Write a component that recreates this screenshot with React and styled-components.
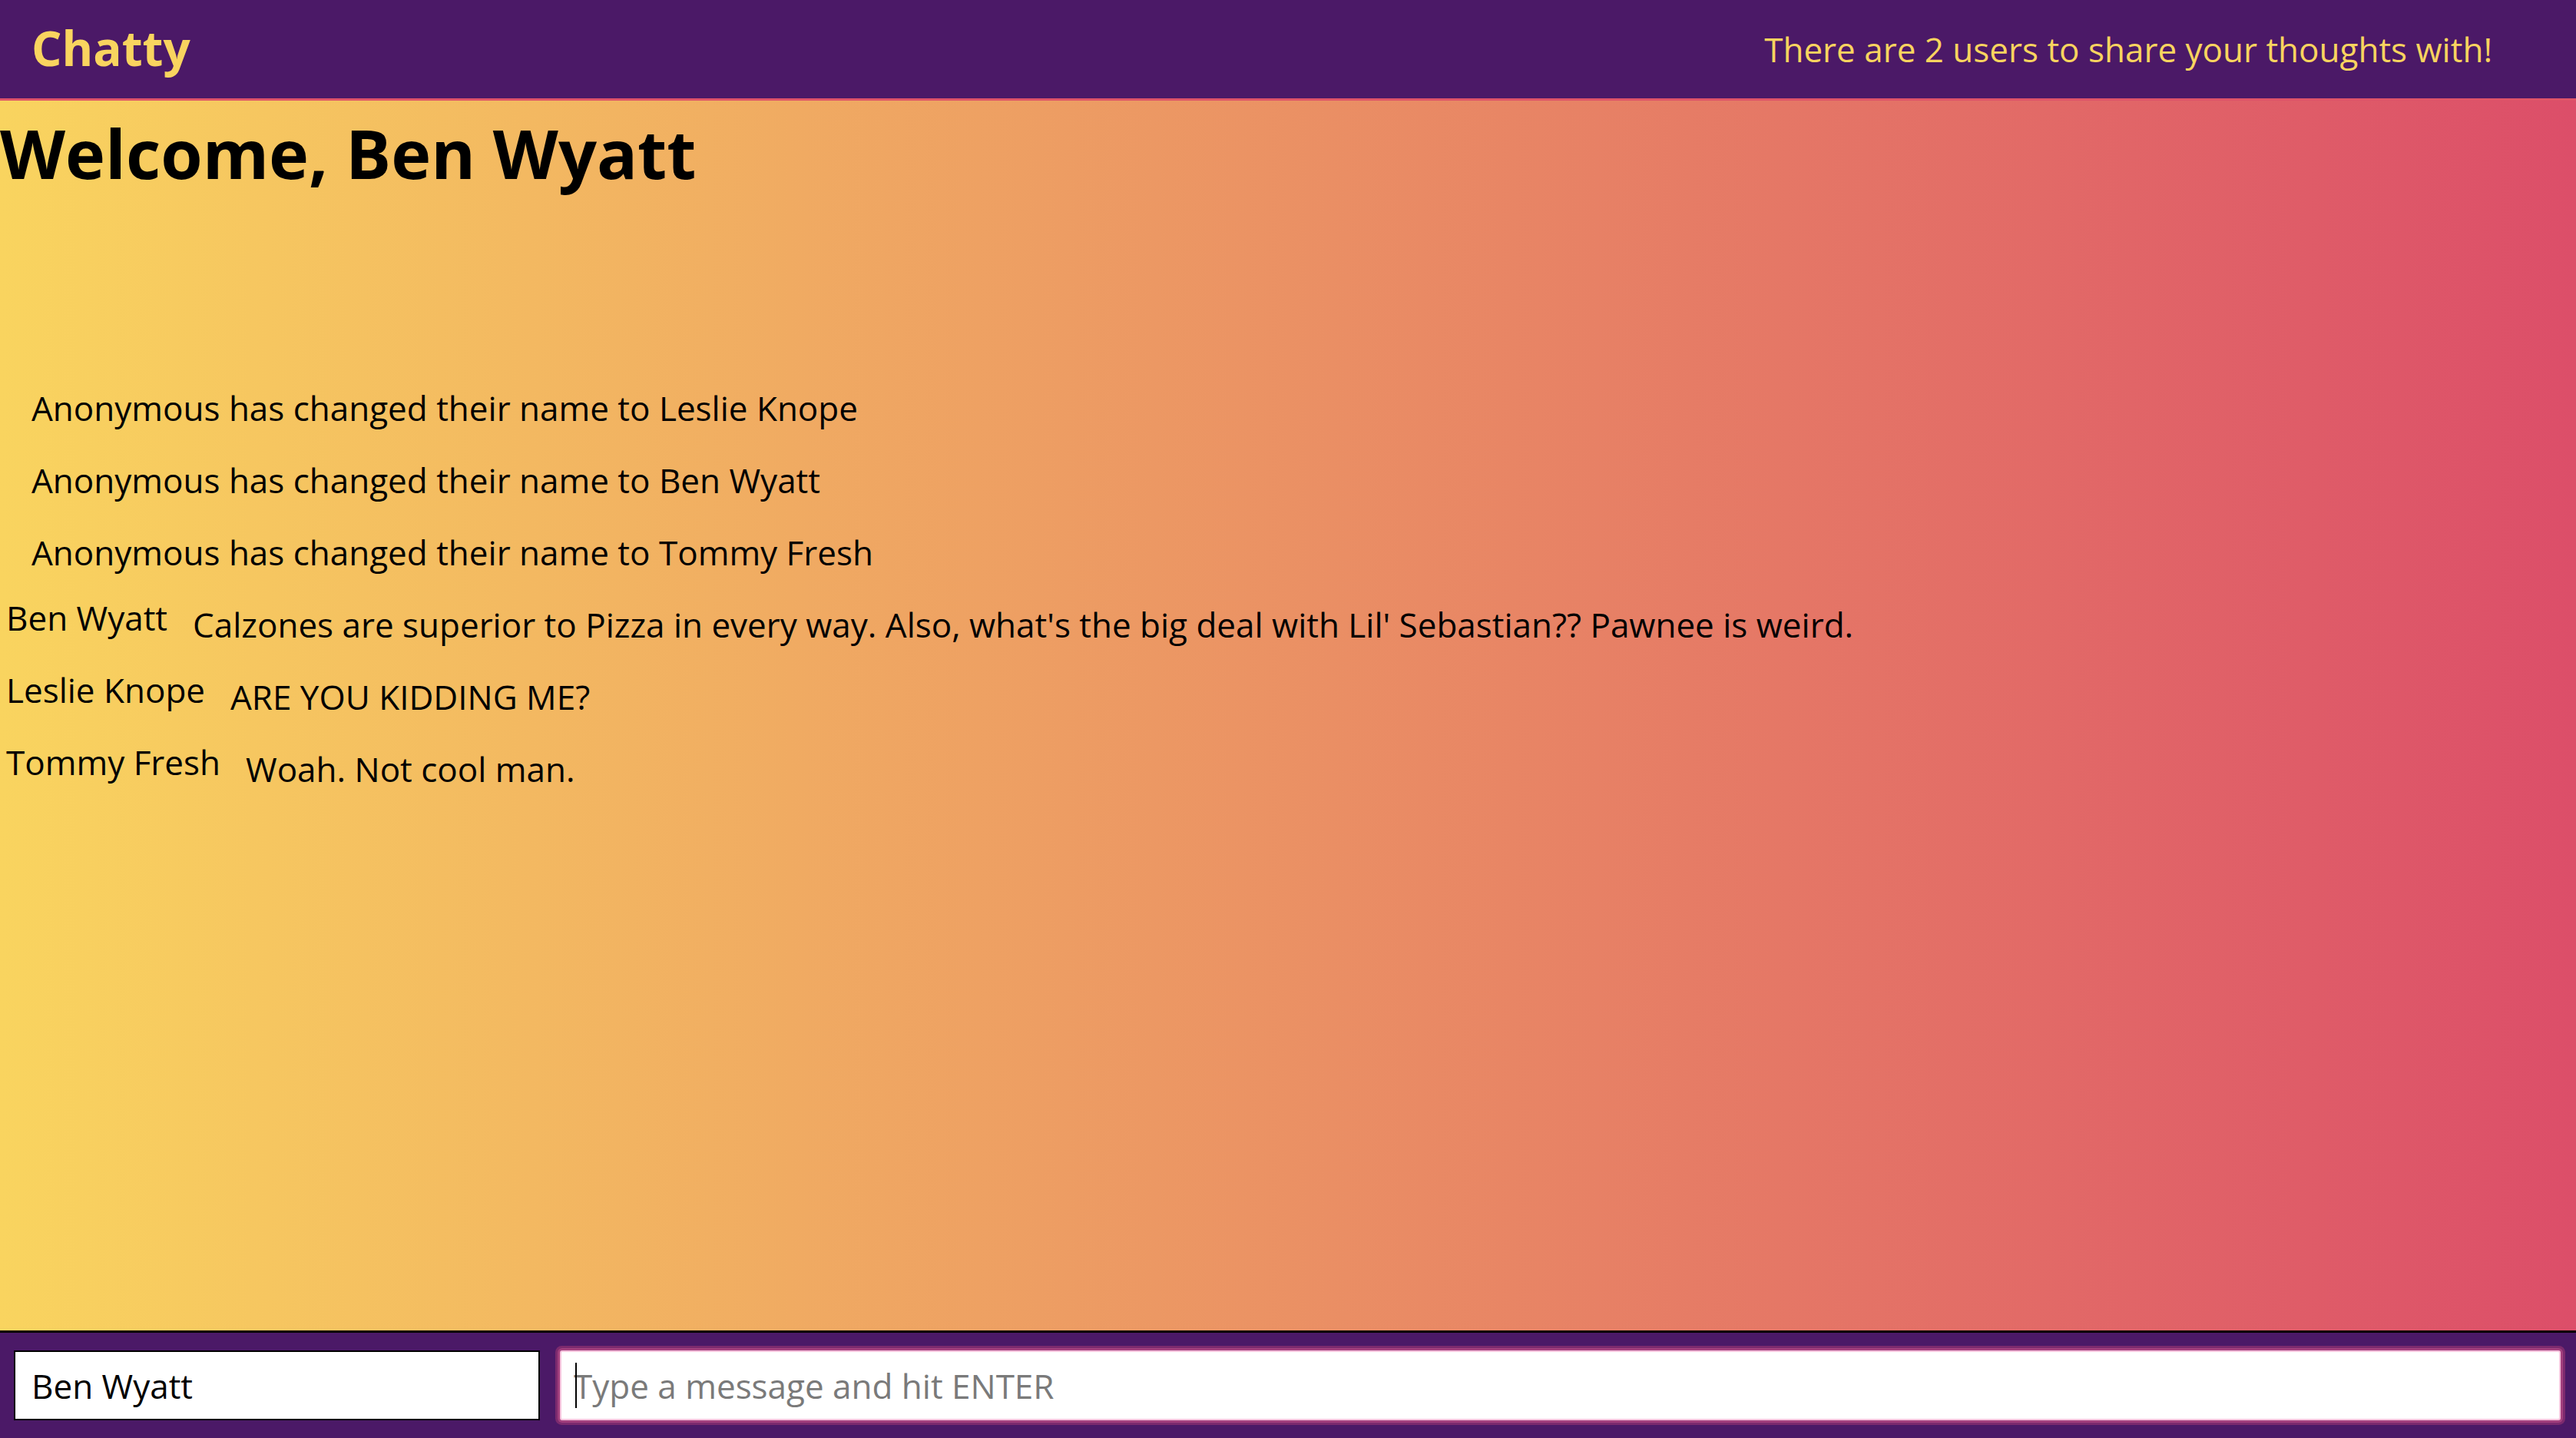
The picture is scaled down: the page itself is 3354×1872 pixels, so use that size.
import React from 'react'
import styled, { createGlobalStyle } from 'styled-components'

const colors = {
  purple: '#4b1967',
  yellow: '#f9d45f',
  pink: '#dc4e69',
  ring: '#a23f7e',
}

const GlobalStyle = createGlobalStyle`
  html, body {
    margin: 0;
    padding: 0;
  }
  body {
    font-family: "Open Sans", "Liberation Sans", sans-serif;
    font-size: 44px;
    color: #000;
  }
  * {
    box-sizing: border-box;
  }
`

const Page = styled.div`
  min-height: 100vh;
  display: flex;
  flex-direction: column;
`

const Navbar = styled.nav`
  height: 131px;
  flex-shrink: 0;
  display: flex;
  align-items: center;
  justify-content: space-between;
  padding: 0 109px 0 41px;
  background-color: ${colors.purple};
  border-bottom: 3px solid #df5468;
`

const Brand = styled.a`
  font-size: 62px;
  font-weight: 700;
  line-height: 84px;
  color: ${colors.yellow};
  text-decoration: none;
  margin-bottom: 4px;
`

const UserCount = styled.span`
  font-size: 44px;
  line-height: 60px;
  color: ${colors.yellow};
`

const Main = styled.main`
  flex: 1;
  background: linear-gradient(to right, ${colors.yellow}, ${colors.pink});
`

const Welcome = styled.h1`
  margin: 8px 0 0;
  font-size: 88px;
  font-weight: 700;
  line-height: 120px;
`

const MessageList = styled.div`
  display: flex;
  flex-direction: column;
  gap: 34px;
  padding-top: 242px;
`

const Row = styled.div`
  display: flex;
  align-items: flex-start;
  line-height: 60px;
  padding-left: ${({ system }) => (system ? '41px' : '8px')};
`

const Username = styled.span`
  padding-right: 33px;
  margin-top: -9px;
  white-space: nowrap;
`

const Content = styled.span``

const Footer = styled.footer`
  flex-shrink: 0;
  display: flex;
  align-items: center;
  padding: 23px 20px 23px 18px;
  background-color: ${colors.purple};
  border-top: 3px solid #000;
`

const NameInput = styled.input`
  width: 685px;
  height: 91px;
  padding: 0 0 0 21px;
  border: 2px solid #000;
  background: #fff;
  font-family: inherit;
  font-size: 44px;
  color: #000;
  outline: none;
`

const MessageField = styled.div`
  position: relative;
  flex: 1;
  margin-left: 26px;
  display: flex;
`

const MessageInput = styled.input`
  flex: 1;
  height: 91px;
  padding: 0 0 0 16px;
  border: 2px solid #f6c5de;
  border-radius: 3px;
  background: #fff;
  font-family: inherit;
  font-size: 44px;
  color: #000;
  outline: none;
  box-shadow: 0 0 0 3px ${colors.ring}, 0 0 0 6px rgba(140, 48, 112, 0.75);
  &::placeholder {
    color: #7a7a7a;
  }
`

const Caret = styled.span`
  position: absolute;
  left: 20px;
  top: 16px;
  width: 2px;
  height: 59px;
  background: #000;
  pointer-events: none;
`

const messages = [
  { id: 1, type: 'system', content: 'Anonymous has changed their name to Leslie Knope' },
  { id: 2, type: 'system', content: 'Anonymous has changed their name to Ben Wyatt' },
  { id: 3, type: 'system', content: 'Anonymous has changed their name to Tommy Fresh' },
  {
    id: 4,
    type: 'user',
    username: 'Ben Wyatt',
    content: "Calzones are superior to Pizza in every way. Also, what's the big deal with Lil' Sebastian?? Pawnee is weird.",
  },
  { id: 5, type: 'user', username: 'Leslie Knope', content: 'ARE YOU KIDDING ME?' },
  { id: 6, type: 'user', username: 'Tommy Fresh', content: 'Woah. Not cool man.' },
]

const Message = ({ message }) =>
  message.type === 'system' ? (
    <Row system>
      <Content>{message.content}</Content>
    </Row>
  ) : (
    <Row>
      <Username>{message.username}</Username>
      <Content>{message.content}</Content>
    </Row>
  )

const App = () => (
  <Page>
    <GlobalStyle />
    <Navbar>
      <Brand href="/">Chatty</Brand>
      <UserCount>There are 2 users to share your thoughts with!</UserCount>
    </Navbar>
    <Main>
      <Welcome>Welcome, Ben Wyatt</Welcome>
      <MessageList>
        {messages.map((m) => (
          <Message key={m.id} message={m} />
        ))}
      </MessageList>
    </Main>
    <Footer>
      <NameInput defaultValue="Ben Wyatt" placeholder="Your Name (Optional)" />
      <MessageField>
        <MessageInput placeholder="Type a message and hit ENTER" />
        <Caret />
      </MessageField>
    </Footer>
  </Page>
)

export default App
